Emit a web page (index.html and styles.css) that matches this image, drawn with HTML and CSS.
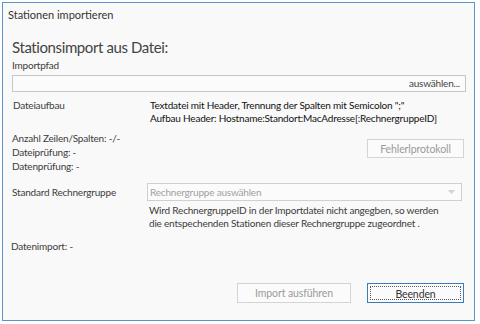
FILE: index.html
```html
<!DOCTYPE html>
<html lang="de">
    <head>
        <meta charset="UTF-8">
        <title>Stationen importieren</title>
        <link rel="stylesheet" href="styles.css">
    </head>
    <body>
        <div class="window">
            <div class="title">Stationen importieren</div>
            <div class="content">
                <h2>Stationsimport aus Datei:</h2>
                <label class="path-label">Importpfad</label>
                <div class="path-input">auswählen...</div>

                <div class="row info">
                    <span class="label">Dateiaufbau</span>
                    <div class="value">
                        Textdatei mit Header, Trennung der Spalten mit Semicolon ";"<br>
                        Aufbau Header: Hostname:Standort:MacAdresse[:RechnergruppeID]
                    </div>
                </div>

                <div class="checks">
                    <div class="status">
                        <div>Anzahl Zeilen/Spalten: -/-</div>
                        <div>Dateiprüfung: -</div>
                        <div>Datenprüfung: -</div>
                    </div>
                    <button class="btn protocol" disabled>Fehlerlprotokoll</button>
                </div>

                <div class="row group">
                    <span class="label">Standard Rechnergruppe</span>
                    <div class="value">
                        <div class="combo">
                            <span>Rechnergruppe auswählen</span>
                            <svg width="7" height="4" viewBox="0 0 7 4"><path d="M0 0h7L3.5 4z" fill="#d2d2d2"/></svg>
                        </div>
                        <div class="hint">
                            Wird RechnergruppeID in der Importdatei nicht angegben, so werden<br>
                            die entspechenden Stationen dieser Rechnergruppe zugeordnet .
                        </div>
                    </div>
                </div>

                <div class="import">Datenimport: -</div>

                <div class="actions">
                    <button class="btn run" disabled>Import ausführen</button>
                    <button class="btn close"><span>Beenden</span></button>
                </div>
            </div>
        </div>
    </body>
</html>
```

FILE: styles.css
```css
body {
    font-family: Lato, "Liberation Sans", sans-serif;
    font-size: 10px;
    letter-spacing: -0.2px;
    color: #3c3c3c;
    margin: 0;
    padding: 0;
    background-color: #ffffff;
    height: 324px;
    overflow: hidden;
    white-space: nowrap;
}
.window {
    margin: 2px 0 0 2px;
    width: 473px;
    height: 319px;
    box-sizing: border-box;
    border: 1px solid #5b93cc;
    background-color: #f9f9f9;
    display: flex;
    flex-direction: column;
}
.title {
    font-size: 11px;
    letter-spacing: 0;
    line-height: 16px;
    padding: 4px 0 0 5px;
    color: #333;
}
.content {
    padding: 0 8px 0 8px;
    display: flex;
    flex-direction: column;
    flex-grow: 1;
}
h2 {
    font-size: 15px;
    letter-spacing: -0.4px;
    font-weight: normal;
    line-height: 20px;
    margin: 14px 0 0 1px;
    color: #444;
}
.path-label {
    line-height: 14px;
    margin: 1px 0 3px 1px;
}
.path-input {
    height: 17px;
    box-sizing: border-box;
    margin-left: 1px;
    border: 1px solid #c6c6c6;
    background-color: #fbfbfb;
    text-align: right;
    line-height: 15px;
    padding-right: 5px;
    color: #444;
}
.row {
    display: flex;
}
.label {
    width: 137px;
    margin-left: 2px;
    flex-shrink: 0;
}
.info {
    margin-top: 7px;
    line-height: 13px;
}
.info .value {
    color: #111;
}
.checks {
    display: flex;
    justify-content: space-between;
    margin-top: 6px;
}
.status {
    line-height: 14px;
    margin-left: 1px;
}
.btn {
    font-family: inherit;
    font-size: 10.5px;
    letter-spacing: -0.1px;
    background-color: #fbfbfb;
    border: 1px solid #d4d4d4;
    color: #9a9a9a;
    padding: 0;
    height: 20px;
}
.protocol {
    width: 97px;
    height: 19px;
    margin: 8px 2px 0 0;
}
.group {
    margin-top: 10px;
    line-height: 13px;
}
.group .label {
    padding-top: 3px;
    width: 135px;
    margin-left: 1px;
}
.combo {
    width: 315px;
    height: 18px;
    border: 1px solid #d0d0d0;
    background-color: #fbfbfb;
    display: flex;
    justify-content: space-between;
    align-items: center;
    padding: 0 6px 0 2px;
    box-sizing: border-box;
    color: #a0a0a0;
}
.hint {
    margin: 3px 0 0 2px;
}
.import {
    margin: 9px 0 0 0;
    line-height: 14px;
}
.actions {
    margin: auto 2px 17px 0;
    display: flex;
    justify-content: flex-end;
    gap: 16px;
}
.run {
    width: 114px;
}
.close {
    width: 97px;
    border-color: #3d7bbf;
    color: #333;
    padding: 2px;
}
.close span {
    display: block;
    height: 100%;
    border: 1px dotted #555;
    box-sizing: border-box;
    line-height: 14px;
}
```
